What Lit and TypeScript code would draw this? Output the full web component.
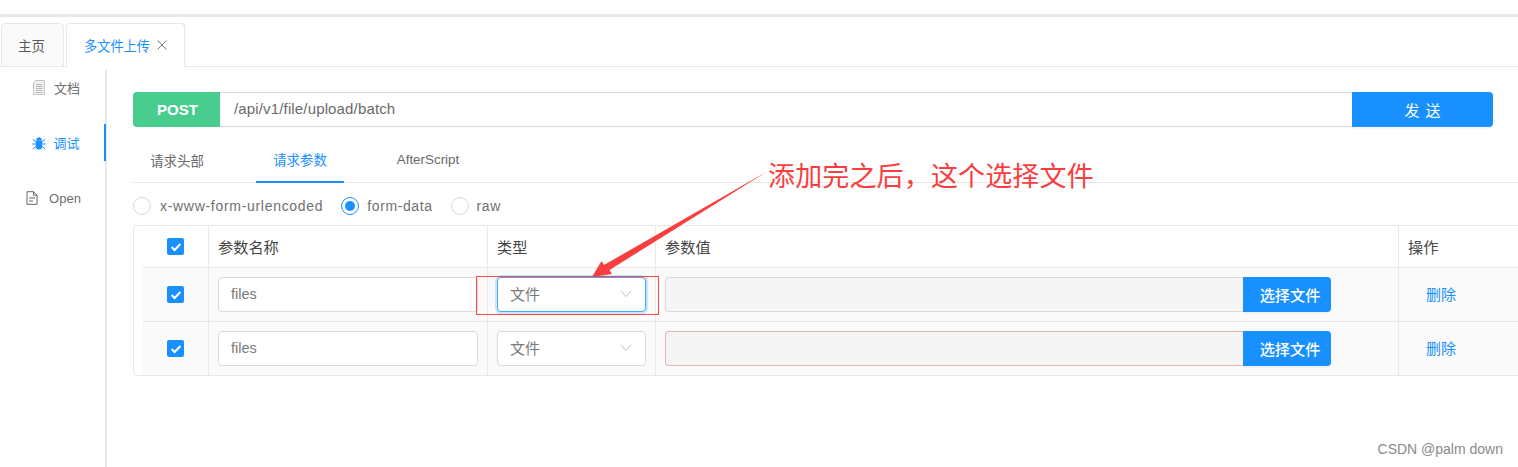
import { LitElement, html, css } from "lit";
import { customElement } from "lit/decorators.js";

const chev = html`<svg class="chev" width="12" height="8" viewBox="0 0 12 8"><path d="M.8.8 6 6.6 11.2.8" fill="none" stroke="#bfbfbf" stroke-width="1"/></svg>`;
const check = html`<span class="cb"><svg width="12" height="10" viewBox="0 0 12 10"><path d="M1.6 5 4.6 8 10.4 2" fill="none" stroke="#fff" stroke-width="2"/></svg></span>`;

@customElement("app-root")
export class AppRoot extends LitElement {
  static styles = css`
    :host { display: block; height: 467px; overflow: hidden; position: relative; background: #fff;
      font-family: "Liberation Sans", "Noto Sans CJK SC", sans-serif; font-size: 13px; color: #595959; }
    .topline { height: 3px; margin-top: 14px; background: #e8e8ec; }
    .tabs { display: flex; gap: 2px; height: 43px; margin-top: 6px; padding-left: 1px; border-bottom: 1px solid #e8e8e8; }
    .tab { box-sizing: border-box; height: 44px; border: 1px solid #e8e8e8; border-radius: 4px 4px 0 0; display: flex; align-items: center; justify-content: center; gap: 6px; background: #fafafa; width: 63px; font-size: 13.4px; padding-right: 2px; }
    .tab.on { width: 119px; background: #fff; color: #1890ff; border-bottom-color: #fff; padding-right: 0; font-size: 13.2px; }
    .x { width: 10px; height: 10px; margin-left: 1px; }
    .body { display: flex; height: 400px; }
    .side { box-sizing: border-box; width: 107px; margin-top: 3px; border-right: 2px solid #e8e8e8; flex: none; display: flex; flex-direction: column; }
    .mi { position: relative; height: 37px; margin-bottom: 18px; display: flex; align-items: center; justify-content: center; gap: 9px; color: #707070; font-size: 13px; padding-left: 7px; box-sizing: border-box; }
    .mi:first-child { height: 35px; margin-bottom: 19px; }
    .mi.open { gap: 11px; padding-left: 2px; padding-top: 1px; }
    .mi.on { color: #1890ff; gap: 7px; }
    .mi.on::after { content: ""; position: absolute; right: -1px; top: 0; bottom: 0; width: 2px; background: #1890ff; }
    .main { flex: 1; min-width: 0; padding: 25px 25px 0 26px; }
    .url { display: flex; height: 35px; width: 1360px; }
    .post { width: 87px; background: #48cd8f; color: #fff; font-weight: 700; font-size: 15px; display: flex; align-items: center; justify-content: center; padding-left: 2px; box-sizing: border-box; border-radius: 4px 0 0 4px; }
    .inp { flex: 1; box-sizing: border-box; border: 1px solid #d9d9d9; border-width: 1px 0; padding-left: 14px; font-size: 15px; line-height: 31px; color: #6a6a6a; letter-spacing: .15px; }
    .send { width: 141px; background: #1890ff; color: #fff; font-size: 15px; display: flex; align-items: center; justify-content: center; border-radius: 0 4px 4px 0; word-spacing: 2px; box-shadow: 0 2px 0 rgba(0,0,0,.03); }
    .sub { display: flex; height: 42px; margin-top: 13px; width: 1411px; border-bottom: 1px solid #e8e8e8; font-size: 13.4px; }
    .st { box-sizing: border-box; height: 43px; width: 88px; display: flex; align-items: center; justify-content: center; padding-bottom: 4px; color: #6a6a6a; }
    .st.a { margin-left: 35px; color: #1890ff; border-bottom: 2px solid #1890ff; }
    .st.as { margin-left: 28px; width: 112px; }
    .radios { box-sizing: border-box; display: flex; align-items: center; height: 42px; padding-top: 4px; font-size: 14px; color: #707070; letter-spacing: .6px; }
    .rb { box-sizing: border-box; width: 18px; height: 18px; border: 1px solid #d9d9d9; border-radius: 50%; margin-right: 8px; display: flex; align-items: center; justify-content: center; background: #fff; }
    .rb.first { margin-right: 9px; }
    .rb.on { border-color: #1890ff; }
    .rb.on i { width: 10px; height: 10px; border-radius: 50%; background: #1890ff; }
    .lab { margin-right: 18px; }
    .lab.long { letter-spacing: .7px; }
    .table { box-sizing: border-box; width: 1500px; border: 1px solid #e8e8e8; border-radius: 4px; }
    .row { display: grid; grid-template-columns: 74px 279px 168px 743px 200px; height: 41px; color: #444; font-size: 15.2px; }
    .row.d { height: 54px; margin-left: 9px; grid-template-columns: 65px 279px 168px 743px 200px; background: #fafafa; border-top: 1px solid #e8e8e8; box-sizing: border-box; }
    .c { box-sizing: border-box; border-left: 1px solid #e8e8e8; padding-left: 9px; display: flex; align-items: center; }
    .c:first-child { border-left: 0; padding: 0 0 0 33px; }
    .row.d .c:first-child { padding-left: 24px; }
    .hd { position: relative; top: -1px; }
    .cb { width: 17px; height: 17px; border-radius: 2px; background: #1890ff; display: flex; align-items: center; justify-content: center; }
    .fld { box-sizing: border-box; width: 260px; height: 35px; border: 1px solid #d9d9d9; border-radius: 4px; background: #fff; padding-left: 12px; padding-bottom: 1px; font-size: 14.5px; color: #7a7a7a; display: flex; align-items: center; }
    .sel { width: 149px; justify-content: space-between; padding-right: 13px; padding-bottom: 2px; font-size: 15px; }
    .sel.f { border-color: #40a9ff; box-shadow: 0 0 0 2px rgba(24,144,255,.2); }
    .filebox { display: flex; width: 666px; height: 35px; }
    .fi { flex: 1; box-sizing: border-box; border: 1px solid #d9d9d9; border-right: 0; border-radius: 4px 0 0 4px; background: #f5f5f5; }
    .fi.err { border-color: #e3b4b4; }
    .btn { width: 88px; background: #1890ff; color: #fff; font-size: 15.2px; display: flex; align-items: center; justify-content: center; border-radius: 0 4px 4px 0; padding: 0 0 2px 6px; box-sizing: border-box; font-weight: 500; box-shadow: 0 2px 0 rgba(0,0,0,.03); }
    .link { color: #1890ff; font-size: 15px; padding-left: 18px; line-height: 1; }
    .box { position: absolute; left: 476px; top: 276px; width: 183px; height: 39px; box-sizing: border-box; border: 1px solid #f44; }
    .note { position: absolute; left: 768px; top: 156px; font-size: 27px; line-height: 38px; letter-spacing: .15px; color: #f83e3e; white-space: nowrap; font-family: "Noto Sans CJK SC", sans-serif; }
    .arrow { position: absolute; left: 0; top: 0; pointer-events: none; }
    .wm { position: absolute; right: 15px; top: 441px; font-size: 14px; color: #8a8a8a; }
  `;

  private row(err: boolean, focus: boolean) {
    return html`<div class="row d">
      <div class="c">${check}</div>
      <div class="c"><div class="fld">files</div></div>
      <div class="c"><div class="fld sel ${focus ? "f" : ""}"><span>文件</span>${chev}</div></div>
      <div class="c"><div class="filebox"><div class="fi ${err ? "err" : ""}"></div><div class="btn">选择文件</div></div></div>
      <div class="c"><span class="link">删除</span></div>
    </div>`;
  }

  render() {
    return html`
      <div class="topline"></div>
      <div class="tabs">
        <div class="tab">主页</div>
        <div class="tab on">多文件上传
          <svg class="x" viewBox="0 0 10 10"><path d="M.5.5l9 9M9.5.5l-9 9" stroke="#777" fill="none"/></svg>
        </div>
      </div>
      <div class="body">
        <div class="side">
          <div class="mi">
            <svg width="13" height="15" viewBox="0 0 13 15"><path d="M3.5 .5h9v14h-11V3z" fill="#f0f0f0" stroke="#c4c4c4"/><path d="M4 4.5h6.5M4 6.5h6.5M4 8.5h6.5M4 10.5h6.5M4 12.5h6.5" stroke="#bbb"/></svg>
            <span>文档</span>
          </div>
          <div class="mi on">
            <svg width="14" height="14" viewBox="0 0 14 14"><path d="M3.8 5h6.4v5.2a3.2 3.2 0 0 1-6.4 0z" fill="#1890ff"/><path d="M4.6 4.2a2.4 2.4 0 0 1 4.8 0zM.8 3.5l3 2M13.2 3.5l-3 2M.2 8h3.6M13.8 8h-3.6M.8 13l3-2.5M13.2 13l-3-2.5" fill="#1890ff" stroke="#1890ff"/></svg>
            <span>调试</span>
          </div>
          <div class="mi open">
            <svg width="12" height="14" viewBox="0 0 12 14"><path d="M1 .7h6.5L11 4.2v9.1H1zM7.5.7v3.5H11M3 7h6M3 10h4" fill="none" stroke="#666"/></svg>
            <span>Open</span>
          </div>
        </div>
        <div class="main">
          <div class="url">
            <div class="post">POST</div>
            <div class="inp">/api/v1/file/upload/batch</div>
            <div class="send">发 送</div>
          </div>
          <div class="sub">
            <div class="st">请求头部</div>
            <div class="st a">请求参数</div>
            <div class="st as">AfterScript</div>
          </div>
          <div class="radios">
            <div class="rb first"></div><span class="lab long">x-www-form-urlencoded</span>
            <div class="rb on"><i></i></div><span class="lab">form-data</span>
            <div class="rb"></div><span class="lab">raw</span>
          </div>
          <div class="table">
            <div class="row">
              <div class="c">${check}</div>
              <div class="c"><span class="hd">参数名称</span></div>
              <div class="c"><span class="hd">类型</span></div>
              <div class="c"><span class="hd">参数值</span></div>
              <div class="c"><span class="hd">操作</span></div>
            </div>
            ${this.row(false, true)}
            ${this.row(true, false)}
          </div>
        </div>
      </div>
      <div class="box"></div>
      <svg class="arrow" width="1518" height="467">
        <polygon points="768,171 604,265 601.5,261 592,277 612,274 609.5,270" fill="#f83e3e"/>
      </svg>
      <div class="note">添加完之后，这个选择文件</div>
      <div class="wm">CSDN @palm down</div>
    `;
  }
}
